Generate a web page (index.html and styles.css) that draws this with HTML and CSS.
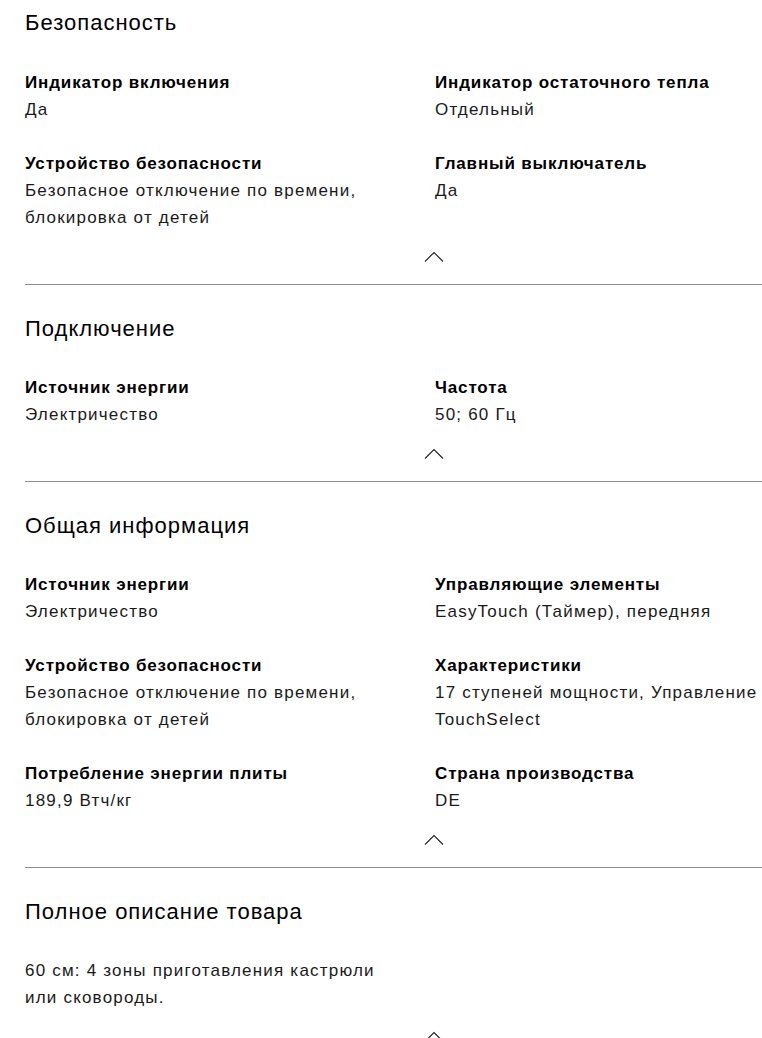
FILE: index.html
```html
<!DOCTYPE html>
<html lang="ru">
<head>
<meta charset="utf-8">
<link rel="stylesheet" href="styles.css">
</head>
<body>
<div class="page">
  <section class="section first">
    <h2 class="title">Безопасность</h2>
    <div class="grid">
      <div class="item"><div class="label">Индикатор включения</div><div class="value">Да</div></div>
      <div class="item"><div class="label">Индикатор остаточного тепла</div><div class="value">Отдельный</div></div>
      <div class="item"><div class="label">Устройство безопасности</div><div class="value">Безопасное отключение по времени, блокировка от детей</div></div>
      <div class="item"><div class="label">Главный выключатель</div><div class="value">Да</div></div>
    </div>
    <div class="toggle"><svg width="20" height="12" viewBox="0 0 20 12"><path d="M1 10.5 L10 1.5 L19 10.5" fill="none" stroke="#222" stroke-width="1.1"/></svg></div>
  </section>
  <section class="section">
    <h2 class="title">Подключение</h2>
    <div class="grid">
      <div class="item"><div class="label">Источник энергии</div><div class="value">Электричество</div></div>
      <div class="item"><div class="label">Частота</div><div class="value">50; 60 Гц</div></div>
    </div>
    <div class="toggle"><svg width="20" height="12" viewBox="0 0 20 12"><path d="M1 10.5 L10 1.5 L19 10.5" fill="none" stroke="#222" stroke-width="1.1"/></svg></div>
  </section>
  <section class="section">
    <h2 class="title">Общая информация</h2>
    <div class="grid">
      <div class="item"><div class="label">Источник энергии</div><div class="value">Электричество</div></div>
      <div class="item"><div class="label">Управляющие элементы</div><div class="value">EasyTouch (Таймер), передняя</div></div>
      <div class="item"><div class="label">Устройство безопасности</div><div class="value">Безопасное отключение по времени, блокировка от детей</div></div>
      <div class="item"><div class="label">Характеристики</div><div class="value">17 ступеней мощности, Управление TouchSelect</div></div>
      <div class="item"><div class="label">Потребление энергии плиты</div><div class="value">189,9 Втч/кг</div></div>
      <div class="item"><div class="label">Страна производства</div><div class="value">DE</div></div>
    </div>
    <div class="toggle"><svg width="20" height="12" viewBox="0 0 20 12"><path d="M1 10.5 L10 1.5 L19 10.5" fill="none" stroke="#222" stroke-width="1.1"/></svg></div>
  </section>
  <section class="section">
    <h2 class="title">Полное описание товара</h2>
    <p class="desc">60 см: 4 зоны приготавления кастрюли или сковороды.</p>
    <div class="toggle"><svg width="20" height="12" viewBox="0 0 20 12"><path d="M1 10.5 L10 1.5 L19 10.5" fill="none" stroke="#222" stroke-width="1.1"/></svg></div>
  </section>
</div>
</body>
</html>
```
FILE: styles.css
```css
html, body {
  margin: 0;
  padding: 0;
  background: #fff;
}
body {
  font-family: "Liberation Sans", Arial, sans-serif;
  color: #000;
}
.page {
  padding-left: 25px;
}
.section {
  border-top: 1px solid #8f8f8f;
  padding-top: 28px;
  padding-bottom: 15px;
}
.section.first {
  border-top: none;
  padding-top: 7px;
}
.title {
  margin: 0 0 29px;
  font-size: 22px;
  line-height: 32px;
  font-weight: normal;
  letter-spacing: 1px;
  color: #000;
}
.first .title {
  margin-bottom: 30px;
}
.grid {
  display: grid;
  grid-template-columns: 410px 1fr;
  row-gap: 27px;
}
.label {
  font-size: 17px;
  line-height: 27px;
  font-weight: bold;
  letter-spacing: 0.85px;
  color: #000;
}
.value {
  font-size: 17px;
  line-height: 27px;
  letter-spacing: 1.2px;
  color: #1a1a1a;
  max-width: 350px;
}
.desc {
  margin: 0;
  font-size: 17px;
  line-height: 27px;
  letter-spacing: 1.2px;
  color: #1a1a1a;
  max-width: 385px;
}
.toggle {
  display: flex;
  align-items: center;
  height: 24px;
  margin-top: 14px;
  padding-left: 399px;
}
.toggle svg {
  display: block;
}
```
